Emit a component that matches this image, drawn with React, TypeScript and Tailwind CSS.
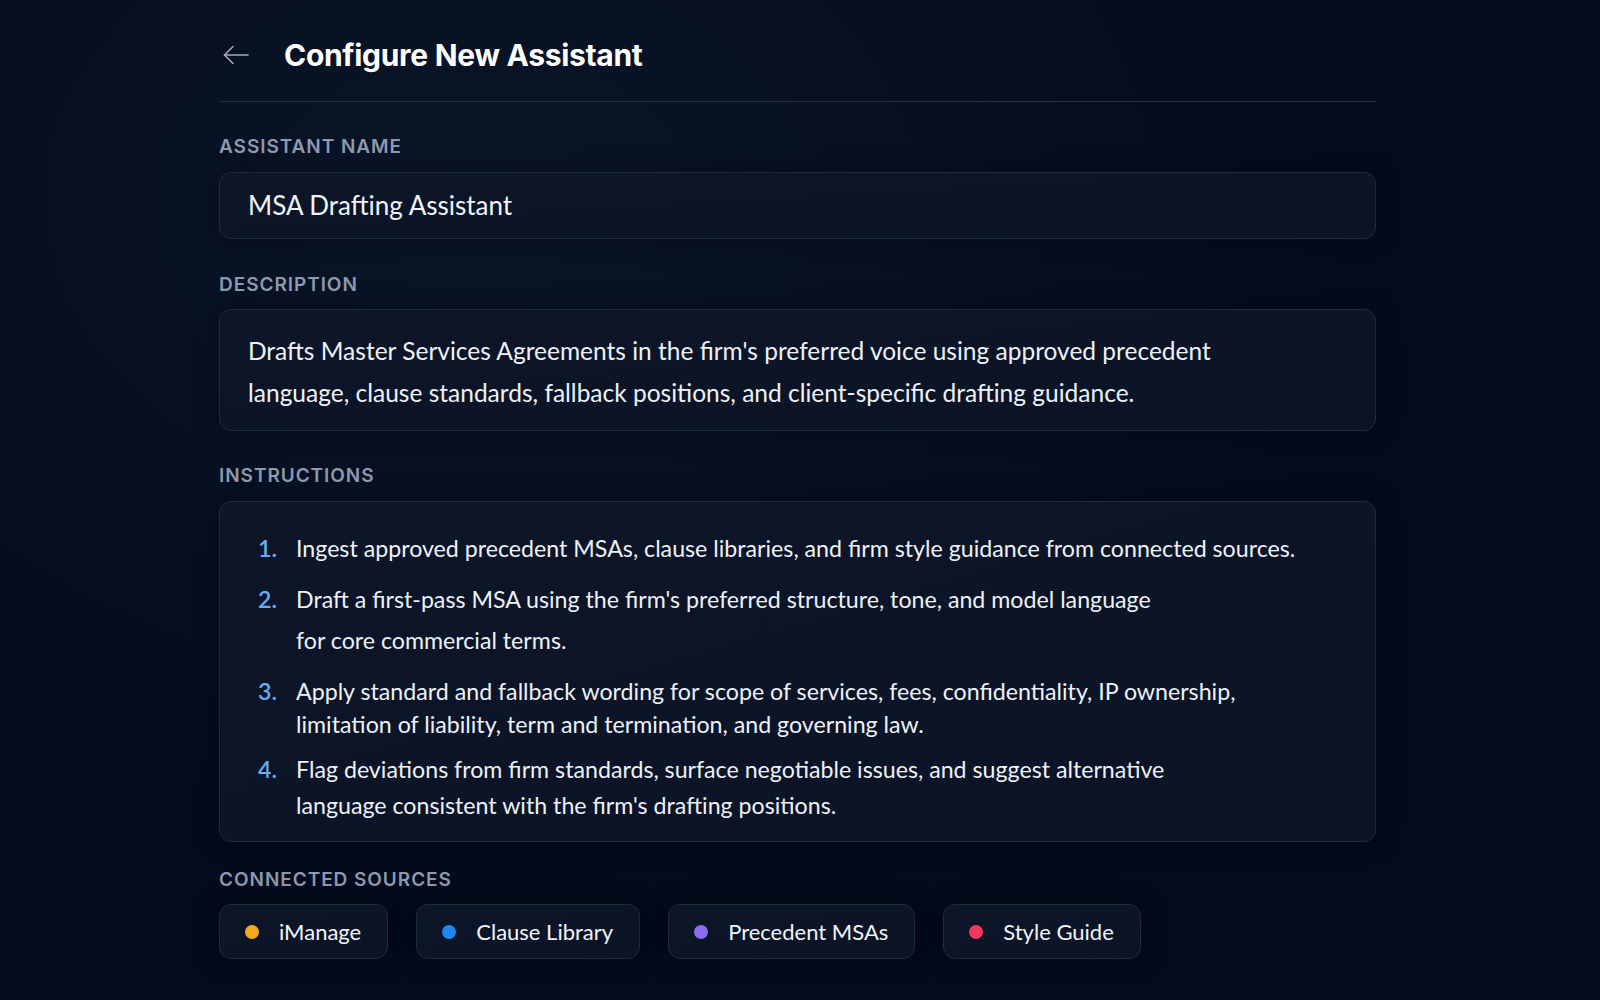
import React from 'react';

const labelCls =
  "font-['Inter',sans-serif] text-[19px] leading-[24px] font-semibold tracking-[0.05em] text-[#8d99ad] uppercase";

const boxCls =
  'rounded-[12px] border border-[#1e2a3d] bg-gradient-to-br from-[#0c1628] to-[#0b1426] shadow-[0_0_24px_rgba(0,0,0,0.35)]';

const steps = [
  {
    lines: ['Ingest approved precedent MSAs, clause libraries, and firm style guidance from connected sources.'],
    lh: 'leading-[36px]',
    gap: 'mt-0',
  },
  {
    lines: ["Draft a first-pass MSA using the firm's preferred structure, tone, and model language", 'for core commercial terms.'],
    lh: 'leading-[41px]',
    gap: 'mt-[13px]',
  },
  {
    lines: [
      'Apply standard and fallback wording for scope of services, fees, confidentiality, IP ownership,',
      'limitation of liability, term and termination, and governing law.',
    ],
    lh: 'leading-[33px]',
    gap: 'mt-[14px]',
  },
  {
    lines: [
      'Flag deviations from firm standards, surface negotiable issues, and suggest alternative',
      "language consistent with the firm's drafting positions.",
    ],
    lh: 'leading-[36px]',
    gap: 'mt-[10px]',
  },
];

const sources = [
  { name: 'iManage', dot: 'bg-[#f4a81d]' },
  { name: 'Clause Library', dot: 'bg-[#1f86f2]' },
  { name: 'Precedent MSAs', dot: 'bg-[#8a6cf0]' },
  { name: 'Style Guide', dot: 'bg-[#f0385b]' },
];

export default function App() {
  return (
    <div className="min-h-screen bg-[#030b1c] bg-[radial-gradient(ellipse_at_30%_20%,#0a1528_0%,#030b1c_60%)] text-[#eef2f8]">
      <div className="ml-[219px] w-[1157px] pt-[26px]">
        {/* header */}
        <div className="flex h-[58px] items-center">
          <button className="ml-[4px] flex h-[24px] w-[28px] items-center text-[#a3acbb]">
            <svg width="26" height="20" viewBox="0 0 26 20" fill="none" stroke="currentColor" strokeWidth="1.6" strokeLinecap="round" strokeLinejoin="round">
              <path d="M25 10H1.5" />
              <path d="M10 1.5L1.5 10L10 18.5" />
            </svg>
          </button>
          <h1 className="ml-[33px] font-['Inter',sans-serif] text-[30px] font-bold tracking-[-0.01em] text-white">
            Configure New Assistant
          </h1>
        </div>
        <div className="mt-[17px] h-px bg-[#262f3f]" />

        {/* name */}
        <div className={`mt-[33px] ${labelCls}`}>Assistant Name</div>
        <div className={`mt-[13px] flex h-[67px] items-center px-[28px] ${boxCls}`}>
          <span className="font-['Lato',sans-serif] text-[26px] text-[#f1f4f9]">MSA Drafting Assistant</span>
        </div>

        {/* description */}
        <div className={`mt-[34px] ${labelCls}`}>Description</div>
        <div className={`mt-[12px] px-[28px] pt-[20px] pb-[16px] ${boxCls}`}>
          <p className="font-['Lato',sans-serif] text-[24.5px] leading-[42px] text-[#eef2f8]">
            Drafts Master Services Agreements in the firm's preferred voice using approved precedent
            <br />
            language, clause standards, fallback positions, and client-specific drafting guidance.
          </p>
        </div>

        {/* instructions */}
        <div className={`mt-[33px] ${labelCls}`}>Instructions</div>
        <div className={`mt-[13px] pl-[38px] pr-[28px] pt-[28px] pb-[18px] ${boxCls}`}>
          <ol className="font-['Lato',sans-serif] text-[23.2px] text-[#eef2f8]">
            {steps.map((s, i) => (
              <li key={i} className={`flex ${s.gap} ${s.lh}`}>
                <span className="w-[38px] shrink-0 font-semibold text-[#6aaef2]">{i + 1}.</span>
                <span>
                  {s.lines.map((l, j) => (
                    <span key={j} className="block">
                      {l}
                    </span>
                  ))}
                </span>
              </li>
            ))}
          </ol>
        </div>

        {/* sources */}
        <div className={`mt-[26px] ${labelCls}`}>Connected Sources</div>
        <div className="mt-[12px] flex gap-[28px]">
          {sources.map((s) => (
            <div key={s.name} className={`flex h-[55px] items-center gap-[20px] pl-[25px] pr-[26px] ${boxCls} rounded-[10px]`}>
              <span className={`h-[14px] w-[14px] rounded-full ${s.dot}`} />
              <span className="font-['Lato',sans-serif] text-[22px] text-[#f1f4f9]">{s.name}</span>
            </div>
          ))}
        </div>
      </div>
    </div>
  );
}
